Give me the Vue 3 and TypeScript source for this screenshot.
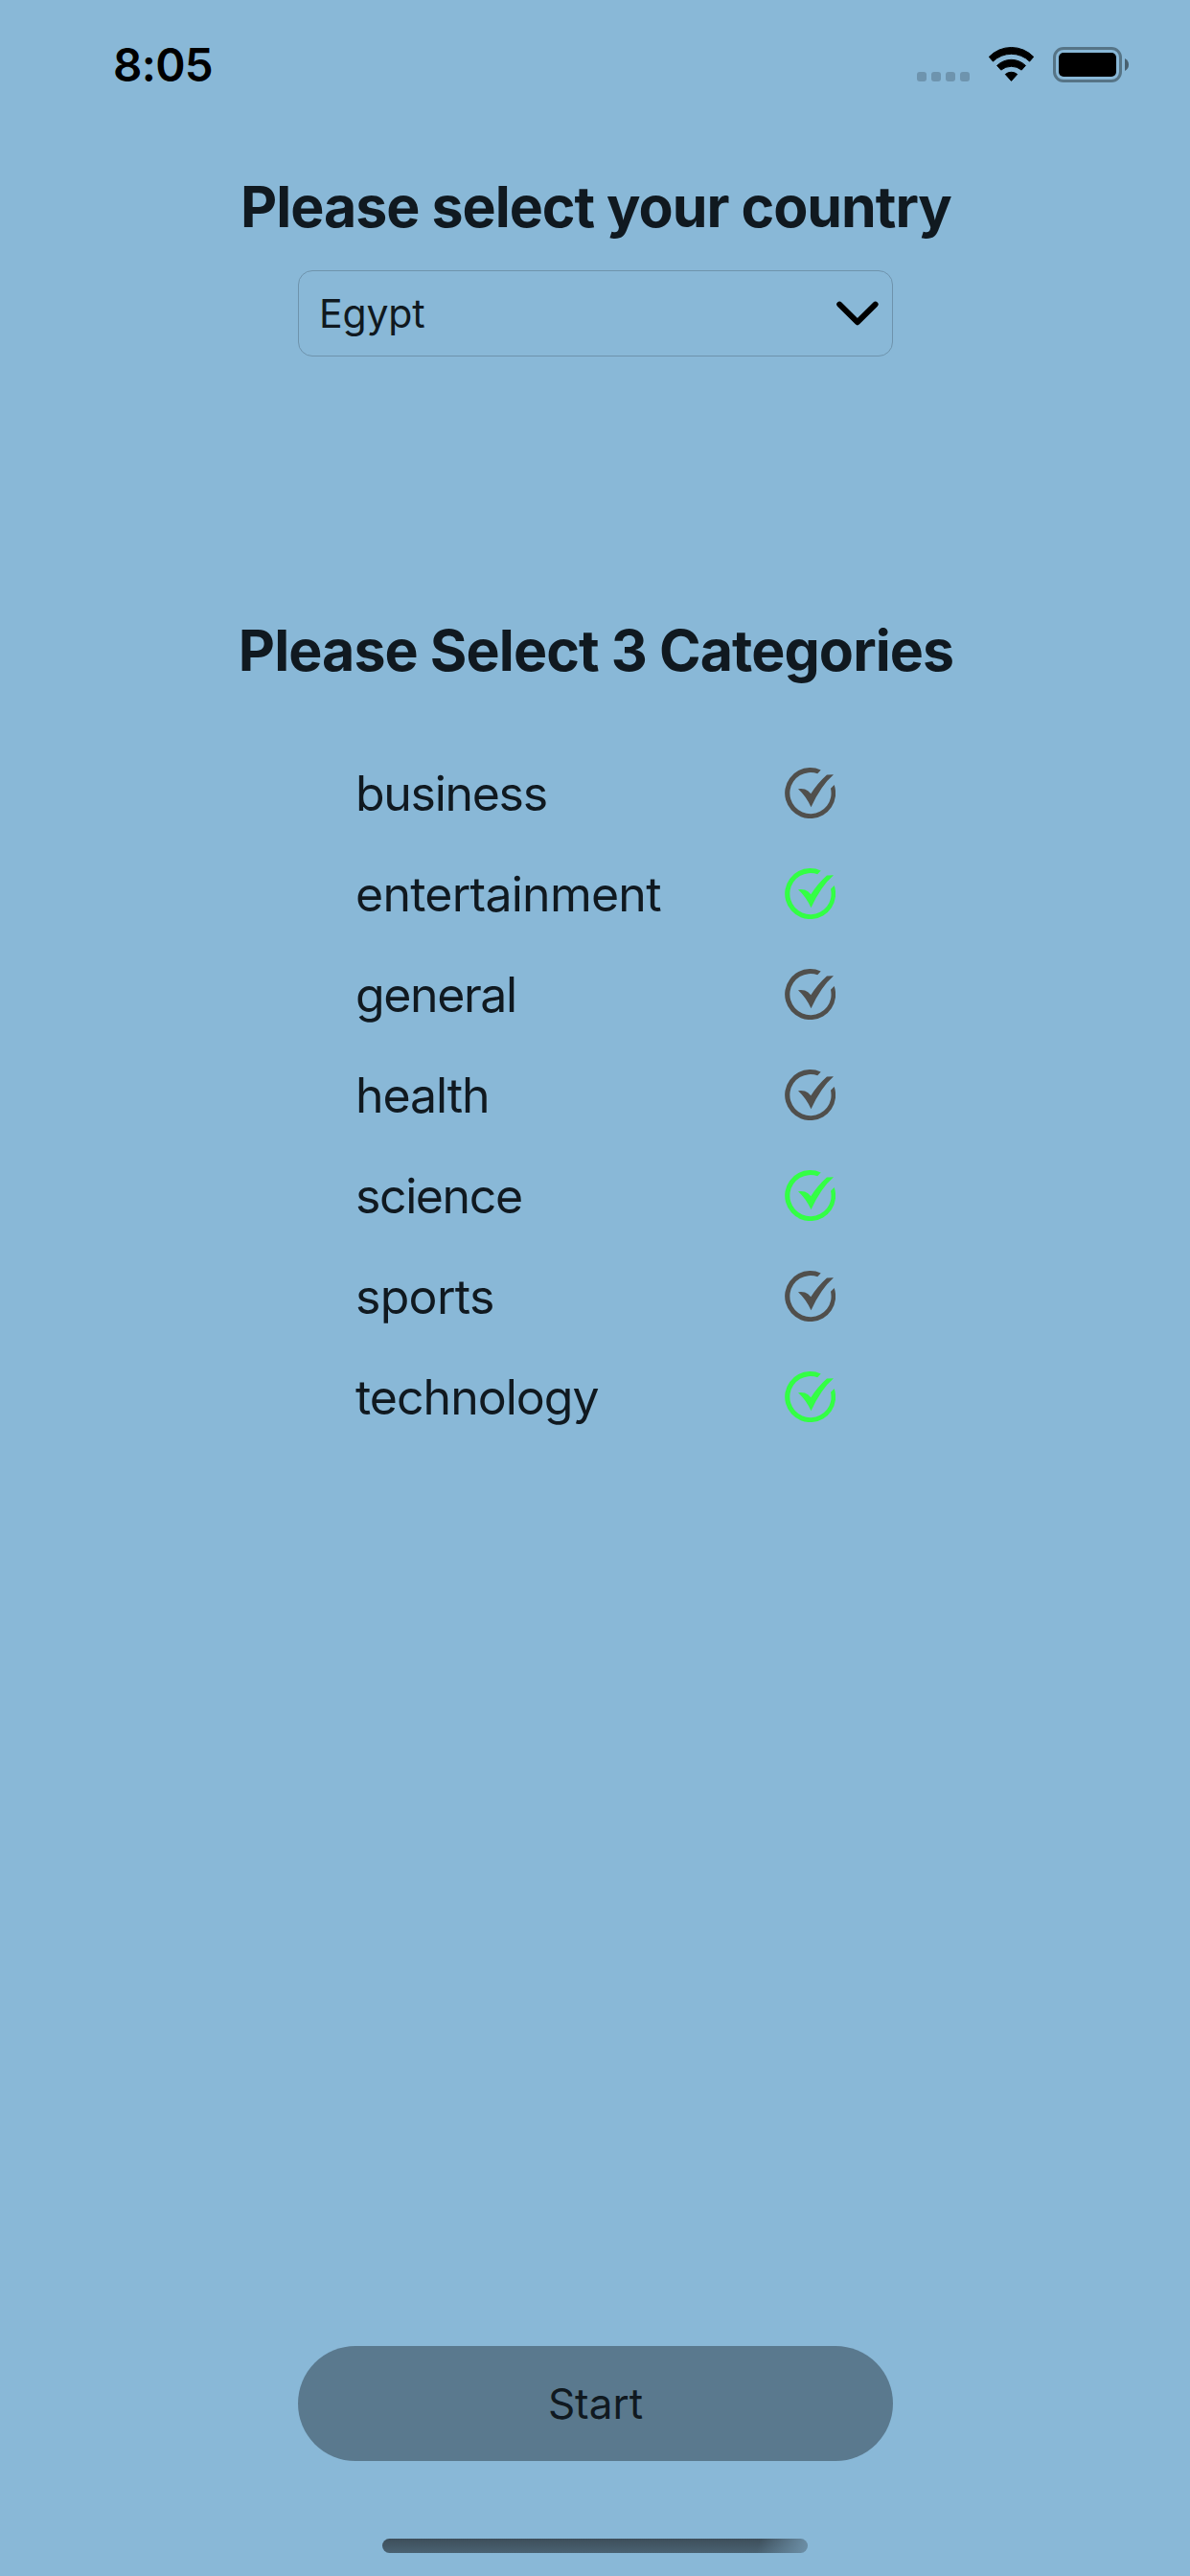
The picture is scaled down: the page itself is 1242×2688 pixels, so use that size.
<script setup lang="ts">
import { reactive, ref } from 'vue'

interface Category {
  name: string
  tracking: number
  selected: boolean
}

const country = ref<string>('Egypt')

// tracking: letter spacing of the label, in pixels
const categories = reactive<Category[]>([
  { name: 'business', tracking: -1.3, selected: false },
  { name: 'entertainment', tracking: -0.75, selected: true },
  { name: 'general', tracking: -1.4, selected: false },
  { name: 'health', tracking: -1.1, selected: false },
  { name: 'science', tracking: -1.4, selected: true },
  { name: 'sports', tracking: -0.7, selected: false },
  { name: 'technology', tracking: -1.0, selected: true },
])

function toggle(category: Category): void {
  category.selected = !category.selected
}
</script>

<template>
  <div class="screen">
    <header class="status">
      <span class="time">8:05</span>
      <div class="indicators">
        <div class="dots"><i v-for="n in 4" :key="n"></i></div>
        <svg class="wifi" width="49" height="38" viewBox="0 0 49 38">
          <g stroke="#000" stroke-width="1" stroke-linejoin="round">
            <path d="M1.3 11.3A32.3 32.3 0 0 1 47.7 11.3L43.6 16.1A27.3 27.3 0 0 0 5.4 16.1Z" />
            <path d="M9.6 20.4A21.3 21.3 0 0 1 39.4 20.4L35.2 25.1A16.8 16.8 0 0 0 13.8 25.1Z" />
            <path d="M18.3 29.5A9.7 9.7 0 0 1 30.7 29.5L24.5 36.4Z" />
          </g>
        </svg>
        <div class="battery"><div class="charge"></div></div>
        <svg class="nub" width="4" height="13" viewBox="0 0 4 13">
          <path d="M0 0Q4 2.2 4 6.5T0 13Z" fill="#48606f" />
        </svg>
      </div>
    </header>

    <main class="content">
      <h1 class="title country-title">Please select your country</h1>
      <div class="select">
        <span class="value">{{ country }}</span>
        <svg width="46" height="28" viewBox="0 0 46 28" fill="none">
          <path d="M4.2 4.6L22.9 23.2L41.6 4.6" stroke="#000" stroke-width="6" stroke-linecap="round" stroke-linejoin="round" />
        </svg>
      </div>

      <h2 class="title category-title">Please Select 3 Categories</h2>
      <ul class="list">
        <li v-for="c in categories" :key="c.name" :class="{ selected: c.selected }" @click="toggle(c)">
          <span class="name" :style="{ letterSpacing: c.tracking + 'px' }">{{ c.name }}</span>
          <svg class="check" width="53" height="53" viewBox="0 0 53 53">
            <path d="M37.7 2.5A26.5 26.5 0 1 0 51.7 18L48 21.8A21.6 21.6 0 1 1 34.2 6.3Z" />
            <path d="M14 22.3Q18 21.8 21 22.6Q24.4 24 27.3 27.2Q34.5 16 44 7.5L51 7.3Q38 18.5 27.5 41.2Q22 29.5 14 22.3Z" />
          </svg>
        </li>
      </ul>
    </main>

    <footer class="footer">
      <button class="start" type="button"><span>Start</span></button>
      <div class="home"></div>
    </footer>
  </div>
</template>

<style>
body {
  margin: 0;
  background: #89b8d7;
}
</style>

<style scoped>
.screen {
  box-sizing: border-box;
  width: 1242px;
  height: 2688px;
  display: flex;
  flex-direction: column;
  overflow: hidden;
  background: #89b8d7;
  color: #101920;
  font-family: Inter, "Liberation Sans", sans-serif;
}
.status {
  height: 132px;
  display: flex;
  justify-content: space-between;
  flex: none;
}
.time {
  margin: 38px 0 0 118px;
  font-size: 47.5px;
  line-height: 60px;
  font-weight: 600;
  letter-spacing: -0.7px;
  color: #000;
}
.indicators {
  display: flex;
  align-items: flex-start;
  margin-right: 64px;
}
.dots {
  display: flex;
  gap: 5px;
  margin: 75px 19px 0 0;
}
.dots i {
  width: 10px;
  height: 10px;
  border-radius: 3px;
  background: #6e94ae;
}
.wifi {
  display: block;
  margin: 48px 19px 0 0;
}
.battery {
  box-sizing: border-box;
  width: 72px;
  height: 37px;
  margin-top: 49px;
  padding: 3px;
  border: 3px solid #567486;
  border-radius: 11px;
}
.charge {
  height: 25px;
  border-radius: 5px;
  background: #000;
}
.nub {
  margin: 61px 0 0 3px;
}
.content {
  flex: 1;
  display: flex;
  flex-direction: column;
  align-items: center;
}
.title {
  margin: 0 0 0 2px;
  font-size: 59px;
  line-height: 80px;
  font-weight: 700;
  white-space: nowrap;
}
.country-title {
  margin-top: 44px;
  letter-spacing: -1px;
}
.select {
  box-sizing: border-box;
  width: 621px;
  height: 90px;
  margin: 26px 0 0 1px;
  padding: 0 13px 0 21px;
  display: flex;
  align-items: center;
  justify-content: space-between;
  border: 1px solid #6e93ac;
  border-radius: 15px;
  font-size: 41px;
}
.value {
  letter-spacing: -0.2px;
}
.category-title {
  margin-top: 267px;
  letter-spacing: -0.9px;
}
.list {
  width: 500px;
  margin: 56px 0 0 2px;
  padding: 0;
  list-style: none;
}
.list li {
  height: 105px;
  display: flex;
  align-items: center;
  justify-content: space-between;
  font-size: 50px;
}
.name {
  margin-left: -1px;
}
.check {
  fill: #504f4c;
}
.selected .check {
  fill: #33ff44;
}
.footer {
  height: 240px;
  flex: none;
  display: flex;
  flex-direction: column;
  align-items: center;
}
.start {
  width: 621px;
  height: 120px;
  margin-left: 1px;
  padding: 0;
  border: 0;
  border-radius: 60px;
  background: #5a798e;
  color: inherit;
  font: 44px Inter, "Liberation Sans", sans-serif;
}
.home {
  width: 444px;
  height: 15px;
  margin-top: 81px;
  border-radius: 8px;
  background:
    linear-gradient(105deg, transparent 88%, #6a8ca3 99%),
    linear-gradient(#3d4e5a, #4a6272);
}
</style>
